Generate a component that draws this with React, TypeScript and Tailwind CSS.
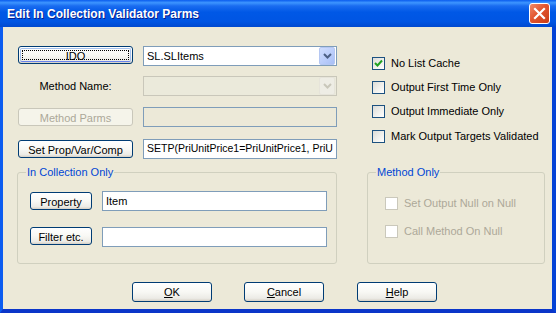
import React from 'react';

const font = "font-['Liberation_Sans',Arial,sans-serif]";

const XpButton: React.FC<{
    label: React.ReactNode;
    className?: string;
    disabled?: boolean;
    focused?: boolean;
}> = ({ label, className = '', disabled = false, focused = false }) => {
    const base = disabled
        ? 'border-[#C9C7BA] text-[#ACA899] bg-[#F5F4EA]'
        : 'border-[#003C74] text-black bg-[linear-gradient(to_bottom,#FFFFFF_0%,#F8F8F4_50%,#ECEBE6_85%,#D6D0C5_100%)]';
    return (
        <div
            className={`relative flex justify-center overflow-hidden rounded-[3px] border ${base} ${className}`}
        >
            {focused && (
                <div className="pointer-events-none absolute inset-[1px] rounded-[2px] border border-[#A5C1EE] border-b-[#6982EE]" />
            )}
            {focused && (
                <div className="pointer-events-none absolute inset-[3px] border border-dotted border-black" />
            )}
            <span className="pt-[3px] leading-[13px] text-[11px]">{label}</span>
        </div>
    );
};

const Field: React.FC<{ value?: string; className?: string; muted?: boolean; small?: boolean }> = ({
    value = '',
    className = '',
    muted = false,
    small = false
}) => (
    <div
        className={`flex h-[20px] items-center overflow-hidden whitespace-nowrap border border-[#7F9DB9] pl-[3px] text-black ${
            small ? 'text-[10.5px]' : 'text-[11px]'
        } ${muted ? 'bg-[#ECE9D8]' : 'bg-white'} ${className}`}
    >
        {value}
    </div>
);

const Chevron: React.FC<{ color: string }> = ({ color }) => (
    <svg width="9" height="6" viewBox="0 0 9 6">
        <path d="M1 1 L4.5 4.5 L8 1" fill="none" stroke={color} strokeWidth="2" />
    </svg>
);

const Combo: React.FC<{ value?: string; disabled?: boolean }> = ({ value = '', disabled = false }) => (
    <div
        className={`ml-[10px] flex h-[20px] w-[194px] items-center border ${
            disabled ? 'border-[#C9C7BA] bg-[#EBEADB]' : 'border-[#7F9DB9] bg-white'
        }`}
    >
        <div className="flex-1 overflow-hidden whitespace-nowrap pl-[3px] text-[11px] text-black">{value}</div>
        <div
            className={`mr-px flex h-[18px] w-[16px] items-center justify-center rounded-[2px] border ${
                disabled
                    ? 'border-[#E6E4DA] bg-[#EEEDE5]'
                    : 'border-[#B5C7F2] bg-[linear-gradient(135deg,#D0DEFE_0%,#B9CCFA_60%,#A8BFF5_100%)]'
            }`}
        >
            <Chevron color={disabled ? '#C9C7BA' : '#4D6185'} />
        </div>
    </div>
);

const Check: React.FC<{ label: string; checked?: boolean; disabled?: boolean; className?: string }> = ({
    label,
    checked = false,
    disabled = false,
    className = ''
}) => (
    <div className={`flex h-[13px] items-center ${className}`}>
        <div
            className={`flex h-[13px] w-[13px] shrink-0 items-center justify-center border ${
                disabled
                    ? 'border-[#CAC8BB] bg-white'
                    : 'border-[#1C5180] bg-[linear-gradient(135deg,#DCDCD7_0%,#F2F2EF_60%,#FFFFFF_100%)]'
            }`}
        >
            {checked && (
                <svg width="9" height="9" viewBox="0 0 9 9">
                    <path d="M1 4 L3.5 6.5 L8 1.5" fill="none" stroke="#21A121" strokeWidth="2" />
                </svg>
            )}
        </div>
        <span
            className={`ml-[6px] whitespace-nowrap text-[11px] leading-[13px] ${
                disabled ? 'text-[#ACA899]' : 'text-black'
            }`}
        >
            {label}
        </span>
    </div>
);

const Group: React.FC<{ title: string; className?: string; children: React.ReactNode }> = ({
    title,
    className = '',
    children
}) => (
    <fieldset className={`h-[98px] rounded-[3px] border border-[#D0D0BF] ${className}`}>
        <legend className="ml-[8px] px-[1px] text-[11px] leading-[13px] text-[#0046D5]">{title}</legend>
        {children}
    </fieldset>
);

export default function App() {
    return (
        <div className={`flex h-[313px] w-[556px] flex-col bg-[#0A4EE4] ${font}`}>
            {/* Title bar */}
            <div className="flex h-[27px] shrink-0 items-center bg-[linear-gradient(to_bottom,#0A5CEE_0%,#3D95FF_10%,#1A6CF0_22%,#0058E6_45%,#0055E3_80%,#0049CF_100%)]">
                <span className="ml-[7px] text-[12px] font-bold text-white [text-shadow:1px_1px_0_#0A1E8C]">
                    Edit In Collection Validator Parms
                </span>
                <div className="ml-auto mr-[6px] flex h-[21px] w-[21px] items-center justify-center rounded-[3px] border border-white bg-[linear-gradient(135deg,#F08A6A_0%,#E2552F_45%,#C93C17_100%)]">
                    <svg width="13" height="13" viewBox="0 0 13 13">
                        <path d="M2 2 L11 11 M11 2 L2 11" stroke="white" strokeWidth="2.2" strokeLinecap="square" />
                    </svg>
                </div>
            </div>

            {/* Client area */}
            <div className="flex flex-1 flex-col border-b-[4px] border-l-[3px] border-r-[4px] border-b-[#0A35C9] border-l-[#0B5CF0] border-r-[#0442D6] bg-[#ECE9D8] pl-[14px] pt-[19px] shadow-[0_4px_0_#001E9A]">
                <div className="flex">
                    <div className="flex w-[320px] flex-col pl-px">
                        <div className="flex items-start">
                            <XpButton
                                focused
                                className="h-[18px] w-[115px]"
                                label={<span className="underline">IDO</span>}
                            />
                            <Combo value="SL.SLItems" />
                        </div>
                        <div className="mt-[10px] flex items-center">
                            <div className="w-[115px] text-center text-[11px] text-black">Method Name:</div>
                            <Combo disabled />
                        </div>
                        <div className="mt-[11px] flex items-start">
                            <XpButton disabled className="mt-px h-[18px] w-[115px]" label="Method Parms" />
                            <Field muted className="ml-[10px] w-[194px]" />
                        </div>
                        <div className="mt-[12px] flex items-start">
                            <XpButton className="mt-px h-[18px] w-[115px]" label="Set Prop/Var/Comp" />
                            <Field small className="ml-[10px] w-[194px]" value="SETP(PriUnitPrice1=PriUnitPrice1, PriU" />
                        </div>
                    </div>
                    <div className="ml-[35px] flex flex-col pt-[11px]">
                        <Check checked label="No List Cache" />
                        <Check className="mt-[11px]" label="Output First Time Only" />
                        <Check className="mt-[11px]" label="Output Immediate Only" />
                        <Check className="mt-[12px]" label="Mark Output Targets Validated" />
                    </div>
                </div>

                <div className="mt-[7px] flex">
                    <Group title="In Collection Only" className="w-[320px]">
                        <div className="ml-[12px] mt-[12px] flex items-start">
                            <XpButton className="mt-px h-[18px] w-[62px]" label="Property" />
                            <Field className="ml-[10px] w-[225px]" value="Item" />
                        </div>
                        <div className="ml-[12px] mt-[16px] flex items-start">
                            <XpButton className="h-[18px] w-[62px]" label="Filter etc." />
                            <Field className="ml-[10px] w-[225px]" />
                        </div>
                    </Group>
                    <Group title="Method Only" className="ml-[30px] w-[178px]">
                        <div className="ml-[17px] mt-[18px] flex flex-col">
                            <Check disabled label="Set Output Null on Null" />
                            <Check disabled className="mt-[15px]" label="Call Method On Null" />
                        </div>
                    </Group>
                </div>

                <div className="mt-[18px] flex pl-[115px]">
                    <XpButton className="h-[20px] w-[80px]" label={<><span className="underline">O</span>K</>} />
                    <XpButton
                        className="ml-[32px] h-[20px] w-[80px]"
                        label={<><span className="underline">C</span>ancel</>}
                    />
                    <XpButton
                        className="ml-[33px] h-[20px] w-[80px]"
                        label={<><span className="underline">H</span>elp</>}
                    />
                </div>
            </div>
        </div>
    );
}
